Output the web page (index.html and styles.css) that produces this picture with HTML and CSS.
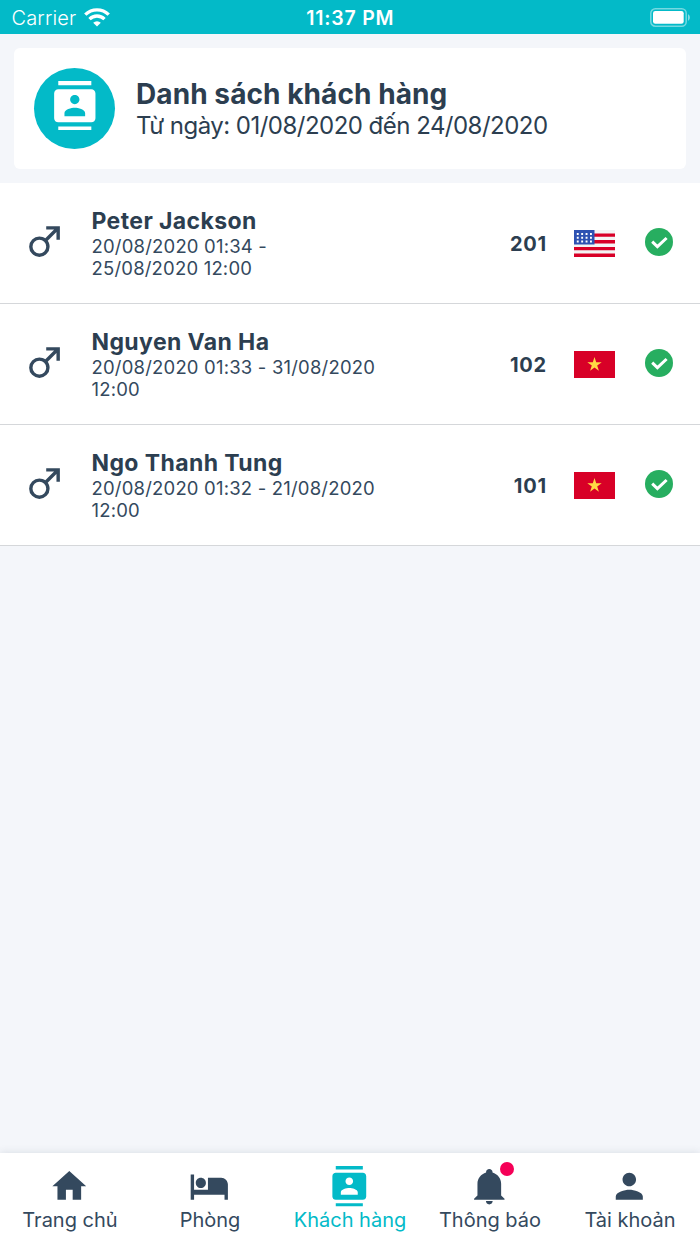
FILE: index.html
```html
<!DOCTYPE html>
<html lang="vi">
<head>
  <meta charset="UTF-8"/>
  <meta name="viewport" content="width=device-width, initial-scale=1.0"/>
  <title>Danh sách khách hàng</title>
  <link rel="stylesheet" href="styles.css">
</head>
<body>
  <!-- Shared icons -->
  <svg class="icon-defs" width="0" height="0">
    <symbol id="icon-contacts" viewBox="0 0 24 24">
      <path d="M20 0H4v2h16V0zM4 24h16v-2H4v2zM20 4H4c-1.1 0-2 .9-2 2v12c0 1.1.9 2 2 2h16c1.1 0 2-.9 2-2V6c0-1.1-.9-2-2-2zm-8 2.75c1.24 0 2.25 1.01 2.25 2.25s-1.01 2.25-2.25 2.25S9.75 10.24 9.75 9s1.01-2.25 2.25-2.25zM17 17H7v-1.5c0-1.67 3.33-2.5 5-2.5s5 .83 5 2.5V17z"/>
    </symbol>
    <symbol id="icon-male" viewBox="0 0 24 24">
      <path d="M9 9c1.29 0 2.5.41 3.47 1.11L17.58 5H13V3h8v8h-2V6.41l-5.11 5.09c.7 1 1.11 2.2 1.11 3.5a6 6 0 1 1-6-6m0 2a4 4 0 1 0 0 8 4 4 0 0 0 0-8z"/>
    </symbol>
    <symbol id="icon-check" viewBox="0 0 28 28">
      <circle cx="14" cy="14" r="14"/>
      <path d="M7.2 13.7l5.2 5 9.2-8.7" fill="none" stroke="#fff" stroke-width="3"/>
    </symbol>
    <symbol id="flag-vn" viewBox="0 0 41 27">
      <path fill="#d80027" d="M0 0h41v27H0z"/>
      <path fill="#ffda44" d="M20.5 6l1.7 5.3h5.5l-4.5 3.2 1.7 5.3-4.4-3.3-4.4 3.3 1.7-5.3-4.5-3.2h5.5z"/>
    </symbol>
    <symbol id="flag-us" viewBox="0 0 41 27">
      <path fill="#f4f4f4" d="M0 0h41v27H0z"/>
      <path fill="#d80027" d="M0 3.4h41v3.3H0zM0 10.1h41v3.4H0zM0 16.9h41v3.4H0zM0 23.6h41V27H0z"/>
      <path fill="#2e52b2" d="M0 0h20.5v14.5H0z"/>
      <path stroke="#fff" stroke-width="1.9" stroke-dasharray="1.9 2.5" d="M2.8 4h16M2.8 7.7h16M2.8 11.5h16"/>
    </symbol>
  </svg>

  <div class="status-bar">
    <div class="carrier">
      <span>Carrier</span>
      <svg class="wifi" viewBox="0 0 26 19">
        <path d="M1.3 6.6a16.8 16.8 0 0 1 23.4 0" fill="none" stroke="#fff" stroke-width="3.4"/>
        <path d="M5.5 11.1a10.6 10.6 0 0 1 15 0" fill="none" stroke="#fff" stroke-width="3.3"/>
        <path d="M13 18.5l-3.8-3.8a5.4 5.4 0 0 1 7.6 0z"/>
      </svg>
    </div>
    <div class="time">11:37 PM</div>
    <div class="battery">
      <svg viewBox="0 0 41 19" width="41" height="19">
        <rect x=".8" y=".8" width="35.4" height="17.4" rx="4.5" fill="none" stroke="#fff" stroke-opacity=".45" stroke-width="1.5"/>
        <rect x="3" y="3" width="30.7" height="12.8" rx="2.3" fill="#fff"/>
        <path d="M38 6.3c2.5 1 2.5 5.4 0 6.4z" fill="#fff" fill-opacity=".5"/>
      </svg>
    </div>
  </div>

  <main>
    <div class="header-card">
      <div class="header-icon">
        <svg><use href="#icon-contacts"/></svg>
      </div>
      <div class="header-text">
        <h1 class="header-title">Danh sách khách hàng</h1>
        <p class="header-date">Từ ngày: 01/08/2020 đến 24/08/2020</p>
      </div>
    </div>

    <ul class="guest-list">
      <li class="guest">
        <svg class="guest-gender"><use href="#icon-male"/></svg>
        <div class="guest-info">
          <h2 class="guest-name">Peter Jackson</h2>
          <p class="guest-stay">20/08/2020 01:34 -<br>25/08/2020 12:00</p>
        </div>
        <span class="guest-room">201</span>
        <svg class="guest-flag"><use href="#flag-us"/></svg>
        <svg class="guest-check"><use href="#icon-check"/></svg>
      </li>
      <li class="guest">
        <svg class="guest-gender"><use href="#icon-male"/></svg>
        <div class="guest-info">
          <h2 class="guest-name">Nguyen Van Ha</h2>
          <p class="guest-stay">20/08/2020 01:33 - 31/08/2020<br>12:00</p>
        </div>
        <span class="guest-room">102</span>
        <svg class="guest-flag"><use href="#flag-vn"/></svg>
        <svg class="guest-check"><use href="#icon-check"/></svg>
      </li>
      <li class="guest">
        <svg class="guest-gender"><use href="#icon-male"/></svg>
        <div class="guest-info">
          <h2 class="guest-name">Ngo Thanh Tung</h2>
          <p class="guest-stay">20/08/2020 01:32 - 21/08/2020<br>12:00</p>
        </div>
        <span class="guest-room">101</span>
        <svg class="guest-flag"><use href="#flag-vn"/></svg>
        <svg class="guest-check"><use href="#icon-check"/></svg>
      </li>
    </ul>
  </main>

  <nav class="tab-bar">
    <a class="tab" href="#">
      <svg viewBox="0 0 24 24"><path d="M10 20v-6h4v6h5v-8h3L12 3 2 12h3v8z"/></svg>
      <span>Trang chủ</span>
    </a>
    <a class="tab" href="#">
      <svg viewBox="0 0 24 24"><path d="M7 13c1.66 0 3-1.34 3-3S8.66 7 7 7s-3 1.34-3 3 1.34 3 3 3zm12-6h-7.8v7H3V5H1v15h2v-3h18v3h2v-9c0-2.21-1.79-4-4-4z"/></svg>
      <span>Phòng</span>
    </a>
    <a class="tab active" href="#">
      <svg><use href="#icon-contacts"/></svg>
      <span>Khách hàng</span>
    </a>
    <a class="tab" href="#">
      <svg viewBox="0 0 24 24"><path d="M12 1.7c1.1 0 1.9.8 1.9 1.8v.3c3 .9 5.1 3.4 5.1 6.7v6.9l2 2V20H3v-.6l2-2v-6.9c0-3.3 2.1-5.8 5.1-6.7v-.3c0-1 .8-1.8 1.9-1.8zM10 20.7h4c0 1.1-.9 2-2 2s-2-.9-2-2z"/></svg>
      <span>Thông báo</span>
      <i class="tab-badge"></i>
    </a>
    <a class="tab" href="#">
      <svg viewBox="0 0 24 24"><path d="M12 12c2.21 0 4-1.79 4-4s-1.79-4-4-4-4 1.79-4 4 1.79 4 4 4zm0 2c-2.67 0-8 1.34-8 4v2h16v-2c0-2.66-5.33-4-8-4z"/></svg>
      <span>Tài khoản</span>
    </a>
  </nav>
</body>
</html>
```

FILE: styles.css
```css
/* Reset & Base */
*, *::before, *::after { margin:0; padding:0; box-sizing:border-box; }
body {
  font-family: Inter, "Noto Sans", sans-serif;
  background: #F4F6FA;
  color: #2C3E50;
  height: 100vh;
  display: flex;
  flex-direction: column;
  overflow: hidden;
}
a { text-decoration:none; color:inherit; }
svg { display:block; flex-shrink:0; fill:currentColor; }
.icon-defs { position:absolute; }

/* Status bar */
.status-bar {
  height: 34px;
  flex-shrink: 0;
  padding: 1px 9px 0 11.5px;
  display: flex;
  align-items: center;
  background: #03BAC8;
  color: white;
  font-size: 20px;
}
.carrier, .battery {
  flex: 1;
  display: flex;
  align-items: center;
}
.carrier {
  gap: 8px;
  font-weight: 300;
  letter-spacing: 0.15px;
}
.wifi {
  width: 26px;
  height: 19px;
}
.time {
  margin-left: -2px;
  font-size: 19.5px;
  font-weight: 600;
  letter-spacing: 0.8px;
}
.battery {
  justify-content: flex-end;
}

/* Header card */
main {
  flex: 1;
}
.header-card {
  display: flex;
  align-items: center;
  gap: 21px;
  height: 121.5px;
  margin: 13.5px 14px 14px;
  padding-left: 20px;
  background: white;
  border-radius: 6px;
}
.header-icon {
  width: 81px;
  height: 81px;
  padding: 13px 0 0 15.5px;
  border-radius: 50%;
  background: #03BAC8;
  color: white;
}
.header-icon svg {
  width: 49.6px;
  height: 49.6px;
}
.header-text {
  padding-top: 3px;
}
.header-title {
  font-size: 28px;
  line-height: 32px;
  font-weight: 700;
  letter-spacing: 0.08px;
}
.header-date {
  font-size: 24px;
  line-height: 32px;
  letter-spacing: -0.52px;
}

/* Guest list */
.guest-list {
  list-style: none;
}
.guest {
  display: flex;
  align-items: center;
  height: 121px;
  padding: 0 27px 0 23.5px;
  background: white;
  border-bottom: 1px solid #D5D7DA;
}
.guest-gender {
  width: 41px;
  height: 41px;
  margin-bottom: 4px;
  color: #34495E;
}
.guest-info {
  flex: 1;
  margin-left: 27px;
}
.guest-name {
  font-size: 23px;
  line-height: 28px;
  font-weight: 700;
  letter-spacing: 0.4px;
}
.guest-stay {
  font-size: 18.5px;
  line-height: 22px;
  letter-spacing: 0.19px;
  color: #34495E;
}
.guest-room {
  padding-top: 2px;
  font-size: 20px;
  font-weight: 700;
  letter-spacing: 0.8px;
}
.guest-flag {
  width: 41px;
  height: 27px;
  margin-left: 27px;
}
.guest-check {
  width: 28px;
  height: 28px;
  margin: 0 0 3px 30px;
  color: #27AE60;
}

/* Bottom tabs */
.tab-bar {
  display: flex;
  height: 91.5px;
  flex-shrink: 0;
  padding-top: 13.5px;
  background: white;
  color: #34495E;
  box-shadow: 0 0 8px rgba(52,73,94,0.15);
}
.tab {
  flex: 1;
  display: flex;
  flex-direction: column;
  align-items: center;
  position: relative;
  font-size: 20px;
  line-height: 24px;
}
.tab svg {
  width: 40.6px;
  height: 40.6px;
  margin: 0 1px 1px 0;
}
.tab.active {
  color: #03BAC8;
}
.tab-badge {
  position: absolute;
  top: -4px;
  left: 79.5px;
  width: 14px;
  height: 14px;
  border-radius: 50%;
  background: #F50057;
}
```
